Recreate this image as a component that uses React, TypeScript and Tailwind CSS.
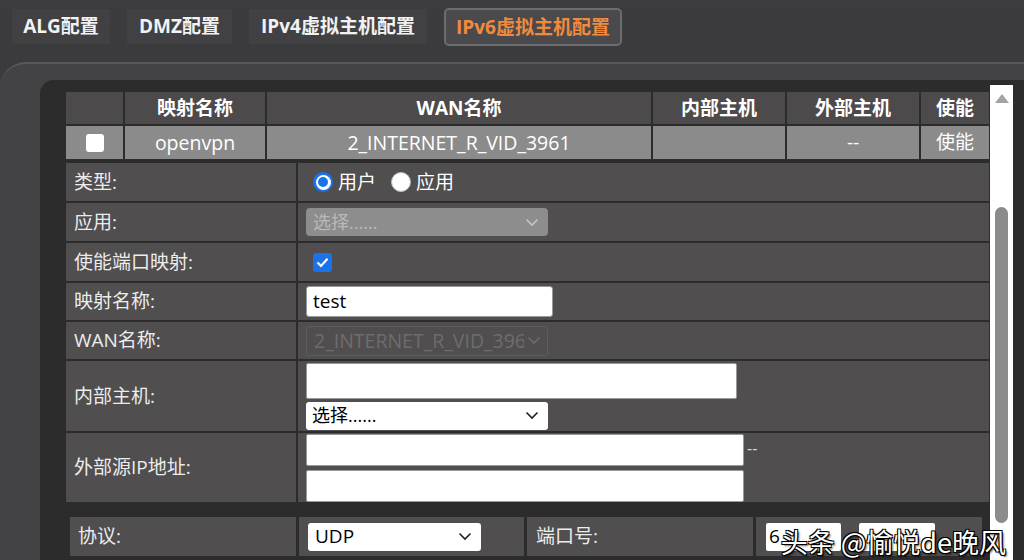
import React from "react";

const Chevron = ({ color = "#222" }: { color?: string }) => (
  <svg width="14" height="9" viewBox="0 0 14 9" fill="none" className="shrink-0">
    <polyline points="1.5,1.5 7,7 12.5,1.5" stroke={color} strokeWidth="1.6" fill="none" />
  </svg>
);

const Tab = ({ label, w, active }: { label: string; w: string; active?: boolean }) =>
  active ? (
    <div className={`${w} h-[38px] -mt-[1px] flex items-center justify-center rounded-[5px] border-2 border-[#6c6c6e] bg-[#4a4a4c] text-[#f08a3e] font-bold text-[19px]`}>
      {label}
    </div>
  ) : (
    <div className={`${w} h-[35px] flex items-center justify-center bg-[#414143] text-[#f2f2f2] font-bold text-[19px]`}>
      {label}
    </div>
  );

const Label = ({ children }: { children: React.ReactNode }) => (
  <div className="bg-[#504e4f] flex items-center pl-[8px] text-[19px] text-[#ececec]">{children}</div>
);

const Cell = ({ children, className = "" }: { children?: React.ReactNode; className?: string }) => (
  <div className={`bg-[#504e4f] flex pl-[8px] ${className}`}>{children}</div>
);

export default function App() {
  return (
    <div className="w-[1024px] h-[560px] overflow-hidden relative flex flex-col bg-gradient-to-b from-[#3c3c3e] to-[#353537] font-['Open_Sans','Noto_Sans_CJK_SC',sans-serif]">
      {/* tabs */}
      <div className="h-[62px] flex items-start pt-[9px] pl-[12px] gap-[17px] shrink-0">
        <Tab label="ALG配置" w="w-[98px]" />
        <Tab label="DMZ配置" w="w-[105px]" />
        <Tab label="IPv4虚拟主机配置" w="w-[178px]" />
        <Tab label="IPv6虚拟主机配置" w="w-[178px]" active />
      </div>

      {/* outer panel */}
      <div className="flex-1 flex flex-col rounded-tl-[26px] border-t-2 border-[#58585a] bg-[#434345] pt-[16px] pl-[40px]">
        <div className="flex-1 flex rounded-tl-[14px] bg-[#2c2c2c] pt-[12px] pl-[26px]">
          <div className="w-[923px] flex flex-col shrink-0">
            {/* table */}
            <div className="grid grid-cols-[57px_140px_384px_132px_132px_68px] gap-[2px]">
              <div className="h-[32px] bg-[#4c4a4b]" />
              {["映射名称", "WAN名称", "内部主机", "外部主机", "使能"].map((h) => (
                <div key={h} className="h-[32px] bg-[#4c4a4b] flex items-center justify-center text-white font-bold text-[19px]">
                  {h}
                </div>
              ))}
              <div className="h-[33px] bg-[#8b8b8b] flex items-center justify-center">
                <span className="w-[18px] h-[18px] rounded-[3px] bg-white" />
              </div>
              <div className="h-[33px] bg-[#8b8b8b] flex items-center justify-center text-white text-[19.5px]">openvpn</div>
              <div className="h-[33px] bg-[#8b8b8b] flex items-center justify-center text-white text-[19.5px]">2_INTERNET_R_VID_3961</div>
              <div className="h-[33px] bg-[#8b8b8b]" />
              <div className="h-[33px] bg-[#8b8b8b] flex items-center justify-center text-white text-[19px]">--</div>
              <div className="h-[33px] bg-[#8b8b8b] flex items-center justify-center text-white text-[19px]">使能</div>
            </div>

            {/* form */}
            <div className="mt-[4px] grid grid-cols-[230px_691px] grid-rows-[38px_38px_38px_37px_37px_70px_69px] gap-[2px]">
              <Label>类型:</Label>
              <Cell className="items-center">
                <span className="ml-[7px] w-[20px] h-[20px] rounded-full bg-[#1a73e8] flex items-center justify-center">
                  <span className="w-[15px] h-[15px] rounded-full bg-white flex items-center justify-center">
                    <span className="w-[10px] h-[10px] rounded-full bg-[#1a73e8]" />
                  </span>
                </span>
                <span className="ml-[5px] text-[19px] text-white">用户</span>
                <span className="ml-[15px] w-[20px] h-[20px] rounded-full bg-white border border-[#bbbbbb]" />
                <span className="ml-[5px] text-[19px] text-white">应用</span>
              </Cell>

              <Label>应用:</Label>
              <Cell className="items-center">
                <div className="w-[242px] h-[28px] rounded-[4px] bg-[#8d8d8d] flex items-center justify-between pl-[7px] pr-[9px] text-[18px] text-[#b9b9b9]">
                  <span>选择......</span>
                  <Chevron color="#c4c4c4" />
                </div>
              </Cell>

              <Label>使能端口映射:</Label>
              <Cell className="items-center">
                <span className="ml-[7px] w-[19px] h-[19px] rounded-[3px] bg-[#1a73e8] flex items-center justify-center">
                  <svg width="13" height="11" viewBox="0 0 13 11" fill="none">
                    <polyline points="1.5,5.5 5,9 11.5,1.8" stroke="white" strokeWidth="2.2" fill="none" />
                  </svg>
                </span>
              </Cell>

              <Label>映射名称:</Label>
              <Cell className="items-center">
                <div className="w-[247px] h-[31px] rounded-[3px] bg-white border border-[#9a9a9a] flex items-center pl-[6px] text-[19px] text-black">
                  test
                </div>
              </Cell>

              <Label>WAN名称:</Label>
              <Cell className="items-center">
                <div className="w-[242px] h-[30px] rounded-[3px] border border-[#5e5c5d] flex items-center justify-between pl-[7px] pr-[6px] text-[19.5px] text-[#6e6c6d] overflow-hidden">
                  <span className="whitespace-nowrap overflow-hidden w-[210px]">2_INTERNET_R_VID_3961</span>
                  <Chevron color="#6e6c6d" />
                </div>
              </Cell>

              <Label>内部主机:</Label>
              <Cell className="flex-col justify-center gap-[3px]">
                <div className="w-[431px] h-[36px] bg-white rounded-[2px] border border-[#9a9a9a]" />
                <div className="w-[242px] h-[28px] bg-white rounded-[3px] flex items-center justify-between pl-[6px] pr-[9px] text-[18px] text-black">
                  <span>选择......</span>
                  <Chevron color="#222" />
                </div>
              </Cell>

              <Label>外部源IP地址:</Label>
              <Cell className="flex-col justify-center gap-[4px]">
                <div className="flex items-center">
                  <div className="w-[438px] h-[32px] bg-white rounded-[2px] border border-[#9a9a9a]" />
                  <span className="ml-[3px] text-[16px] text-[#dddddd] -mt-[4px]">--</span>
                </div>
                <div className="w-[438px] h-[32px] bg-white rounded-[2px] border border-[#9a9a9a]" />
              </Cell>
            </div>

            {/* protocol row */}
            <div className="mt-[15px] pl-[4px] grid grid-cols-[226px_225px_226px_226px] gap-[3px]">
              <div className="h-[39px] bg-[#504e4f] flex items-center pl-[8px] text-[19px] text-[#ececec]">协议:</div>
              <div className="h-[39px] bg-[#504e4f] flex items-center pl-[9px]">
                <div className="w-[173px] h-[28px] bg-white rounded-[3px] flex items-center justify-between pl-[7px] pr-[9px] text-[19px] text-black">
                  <span>UDP</span>
                  <Chevron color="#222" />
                </div>
              </div>
              <div className="h-[39px] bg-[#504e4f] flex items-center pl-[9px] text-[19px] text-[#ececec]">端口号:</div>
              <div className="h-[39px] bg-[#504e4f] flex items-center pl-[10px]">
                <div className="w-[75px] h-[28px] bg-white rounded-[2px] flex items-center pl-[3px] text-[19px] text-black overflow-hidden">6</div>
                <div className="ml-[18px] w-[76px] h-[28px] bg-white rounded-[2px] flex items-center pl-[3px] text-[19px] text-black overflow-hidden"></div>
              </div>
            </div>
          </div>

          {/* scrollbar */}
          <div className="ml-[1px] -mt-[7px] w-[23px] bg-white flex flex-col items-center shrink-0">
            <svg className="mt-[9px]" width="14" height="9" viewBox="0 0 14 9">
              <polygon points="7,0 14,9 0,9" fill="#a3a3a3" />
            </svg>
            <div className="mt-[104px] w-[13px] h-[316px] rounded-full bg-[#8b8b8b]" />
          </div>
        </div>
      </div>

      {/* watermark */}
      <div className="absolute right-[18px] bottom-[5px] text-white text-[27px] leading-none whitespace-nowrap font-['Noto_Sans_CJK_SC',sans-serif] [text-shadow:1px_1px_0_#000,-1px_-1px_0_#000,1px_-1px_0_#000,-1px_1px_0_#000,2px_2px_2px_rgba(0,0,0,0.6)]">
        头条 @愉悦de晚风
      </div>
    </div>
  );
}
